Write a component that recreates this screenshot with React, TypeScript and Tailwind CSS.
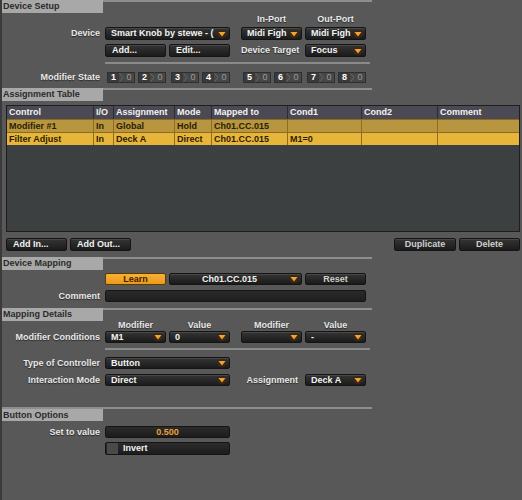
import clsx from 'clsx';
import { FC, ReactNode } from 'react';

const Arrow: FC = () => (
  <svg width="10" height="8" viewBox="0 0 10 8" className="shrink-0">
    <ellipse cx="5" cy="4" rx="5" ry="4" fill="#3a2817" />
    <polygon points="1.5,2 8.5,2 5,6.5" fill="#f2a22f" />
  </svg>
);

const control =
  'flex h-full items-center rounded-[2px] border border-[#141414] bg-linear-to-b from-[#353535] to-[#1b1b1b] shadow-[inset_0_1px_0_#474747]';

const Select: FC<{ text: string; className?: string; center?: boolean }> = ({ text, className, center }) => (
  <div className={clsx(control, 'pr-[2px] text-[#f2f2f2]', className)}>
    <span className={clsx('flex-1 overflow-hidden whitespace-nowrap', center ? 'text-center' : 'pl-[5px]')}>{text}</span>
    <Arrow />
  </div>
);

const Button: FC<{ children: ReactNode; className?: string; left?: boolean }> = ({ children, className, left }) => (
  <div className={clsx(control, left ? 'pl-[6px] text-[#f2f2f2]' : 'justify-center text-[#cfcfcf]', className)}>
    {children}
  </div>
);

const Label: FC<{ children?: ReactNode; className?: string }> = ({ children, className }) => (
  <div className={clsx('whitespace-nowrap text-[#e8e8e8] [text-shadow:0_1px_1px_rgba(0,0,0,0.55)]', className)}>
    {children}
  </div>
);

const SectionHeader: FC<{ title: string; className?: string }> = ({ title, className }) => (
  <div className={clsx('-ml-[2px] flex h-[13px] w-[372px]', className)}>
    <div className="w-[103px] bg-[#a8a8a8] pl-[3px] leading-[13px] text-[#2b2b2b]">{title}</div>
    <div className="flex-1 border-t-2 border-[#8e8e8e]" />
  </div>
);

const Divider: FC<{ className?: string }> = ({ className }) => (
  <div className={clsx('ml-[103px] h-[2px] w-[265px] bg-[#8a8a8a]', className)} />
);

const Row: FC<{ label?: string; children: ReactNode; className?: string; short?: boolean }> = ({
  label,
  children,
  className,
  short,
}) => (
  <div className={clsx('flex items-center', short ? 'h-[12px]' : 'h-[13px]', className)}>
    <Label className="w-[98px] text-right">{label}</Label>
    <div className="ml-[5px] flex h-full items-center">{children}</div>
  </div>
);

const ModBox: FC<{ n: number }> = ({ n }) => (
  <div className="flex h-[11px] w-[28px] items-center border border-[#2f2f2f] bg-[#474747]">
    <span className="w-[11px] bg-[#3a3a3a] text-center leading-[9px] text-white">{n}</span>
    <svg width="5" height="9" viewBox="0 0 5 9" className="shrink-0">
      <polyline points="0.5,0.5 4,4.5 0.5,8.5" fill="none" stroke="#6a6a6a" strokeWidth="1" />
    </svg>
    <span className="flex-1 text-center font-normal leading-[9px] text-[#9a9a9a]">0</span>
  </div>
);

const columns = ['Control', 'I/O', 'Assignment', 'Mode', 'Mapped to', 'Cond1', 'Cond2', 'Comment'];
const rows = [
  { cells: ['Modifier #1', 'In', 'Global', 'Hold', 'Ch01.CC.015', '', '', ''], bg: 'bg-[#b8953f]' },
  { cells: ['Filter Adjust', 'In', 'Deck A', 'Direct', 'Ch01.CC.015', 'M1=0', '', ''], bg: 'bg-[#e8b53b]' },
];
const grid = 'grid grid-cols-[87px_20px_61px_37px_76px_74px_76px_1fr]';

export default function App() {
  return (
    <div className="flex h-[500px] w-[522px] flex-col overflow-hidden border-l-2 border-[#3b3b3b] bg-[#585858] font-['Liberation_Sans',Arial,sans-serif] text-[9px] font-bold leading-none">
      {/* Device Setup */}
      <SectionHeader title="Device Setup" />
      <div className="flex h-[14px] items-end pb-[3px]">
        <Label className="ml-[239px] w-[61px] text-center">In-Port</Label>
        <Label className="ml-[3px] w-[61px] text-center">Out-Port</Label>
      </div>
      <Row label="Device">
        <Select text="Smart Knob by stewe - (" className="w-[125px]" />
        <Select text="Midi Figh" className="ml-[11px] w-[61px]" />
        <Select text="Midi Figh" className="ml-[3px] w-[61px]" />
      </Row>
      <Row className="mt-[4px]">
        <Button left className="w-[61px]">Add...</Button>
        <Button left className="ml-[3px] w-[61px]">Edit...</Button>
        <Label className="ml-[11px] w-[61px]">Device Target</Label>
        <Select text="Focus" className="ml-[3px] w-[61px]" />
      </Row>
      <Divider className="mt-[5px]" />
      <div className="mt-[8px] flex h-[11px] items-center">
        <Label className="w-[98px] text-right">Modifier State</Label>
        <div className="ml-[5px] flex">
          {[0, 1, 2, 3].map((c) => (
            <div
              key={c}
              className={clsx('flex w-[61px] gap-[3px] pl-[2px]', c === 2 ? 'ml-[11px]' : c > 0 ? 'ml-[3px]' : '')}
            >
              <ModBox n={c * 2 + 1} />
              <ModBox n={c * 2 + 2} />
            </div>
          ))}
        </div>
      </div>

      {/* Assignment Table */}
      <SectionHeader title="Assignment Table" className="mt-[5px]" />
      <div className="mt-[4px] ml-[4px] flex h-[127px] w-[514px] flex-col border border-[#1e1e1e] bg-[#3d4041]">
        <div className={clsx(grid, 'h-[13px] bg-[#4b4a54] text-[#f2f2f2]')}>
          {columns.map((c, i) => (
            <div key={c} className={clsx('pl-[2px] leading-[13px]', i < columns.length - 1 && 'border-r border-[#2c2c30]')}>
              {c}
            </div>
          ))}
        </div>
        {rows.map((r) => (
          <div key={r.cells[0]} className={clsx(grid, r.bg, 'h-[13px] border-t border-[#8a6a22] text-[#2a1d04]')}>
            {r.cells.map((c, i) => (
              <div
                key={i}
                className={clsx('whitespace-nowrap pl-[2px] leading-[12px]', i < r.cells.length - 1 && 'border-r border-[#8e6c20]')}
              >
                {c}
              </div>
            ))}
          </div>
        ))}
      </div>
      <div className="mt-[6px] flex h-[13px] pr-[2px]">
        <Button left className="ml-[4px] w-[61px]">Add In...</Button>
        <Button left className="ml-[3px] w-[61px]">Add Out...</Button>
        <Button className="ml-auto w-[62px]">Duplicate</Button>
        <Button className="ml-[3px] w-[61px]">Delete</Button>
      </div>

      {/* Device Mapping */}
      <SectionHeader title="Device Mapping" className="mt-[6px]" />
      <Row short className="mt-[3px]">
        <div className="flex h-full w-[61px] items-center justify-center rounded-[2px] border border-[#5a3a08] bg-linear-to-b from-[#f7b035] to-[#ec9a18] text-[#3b2300]">
          Learn
        </div>
        <Select text="Ch01.CC.015" center className="ml-[3px] w-[133px]" />
        <Button className="ml-[3px] w-[61px]">Reset</Button>
      </Row>
      <Row short label="Comment" className="mt-[5px]">
        <div className="h-full w-[261px] rounded-[2px] border border-[#141414] bg-linear-to-b from-[#2a2a2a] to-[#1f1f1f]" />
      </Row>

      {/* Mapping Details */}
      <SectionHeader title="Mapping Details" className="mt-[6px]" />
      <div className="flex h-[10px] items-start">
        <Label className="ml-[103px] w-[61px] text-center">Modifier</Label>
        <Label className="ml-[3px] w-[61px] text-center">Value</Label>
        <Label className="ml-[11px] w-[61px] text-center">Modifier</Label>
        <Label className="ml-[3px] w-[61px] text-center">Value</Label>
      </div>
      <Row short label="Modifier Conditions">
        <Select text="M1" className="w-[61px]" />
        <Select text="0" className="ml-[3px] w-[61px]" />
        <Select text="" className="ml-[11px] w-[61px]" />
        <Select text="-" className="ml-[3px] w-[61px]" />
      </Row>
      <Divider className="mt-[5px]" />
      <Row short label="Type of Controller" className="mt-[7px]">
        <Select text="Button" className="w-[125px]" />
      </Row>
      <Row short label="Interaction Mode" className="mt-[5px]">
        <Select text="Direct" className="w-[125px]" />
        <Label className="ml-[11px] w-[57px] text-right">Assignment</Label>
        <Select text="Deck A" className="ml-[7px] w-[61px]" />
      </Row>

      {/* Button Options */}
      <div className="-ml-[2px] mt-[21px] h-[2px] w-[372px] bg-[#8e8e8e]" />
      <div className="-ml-[2px] h-[12px] w-[103px] bg-[#a8a8a8] pl-[3px] leading-[12px] text-[#2b2b2b]">Button Options</div>
      <Row short label="Set to value" className="mt-[5px]">
        <div className="flex h-full w-[125px] items-center justify-center rounded-[2px] border border-[#141414] bg-linear-to-b from-[#2c2c2c] to-[#1c1c1c] text-[#eea234]">
          0.500
        </div>
      </Row>
      <Row className="mt-[4px]">
        <div className="flex h-full w-[125px] items-center rounded-[2px] border border-[#141414] bg-linear-to-b from-[#2c2c2c] to-[#1c1c1c] text-[#f2f2f2]">
          <div className="ml-[1px] h-[11px] w-[11px] bg-[#4a4a4a]" />
          <span className="ml-[5px]">Invert</span>
        </div>
      </Row>
    </div>
  );
}
